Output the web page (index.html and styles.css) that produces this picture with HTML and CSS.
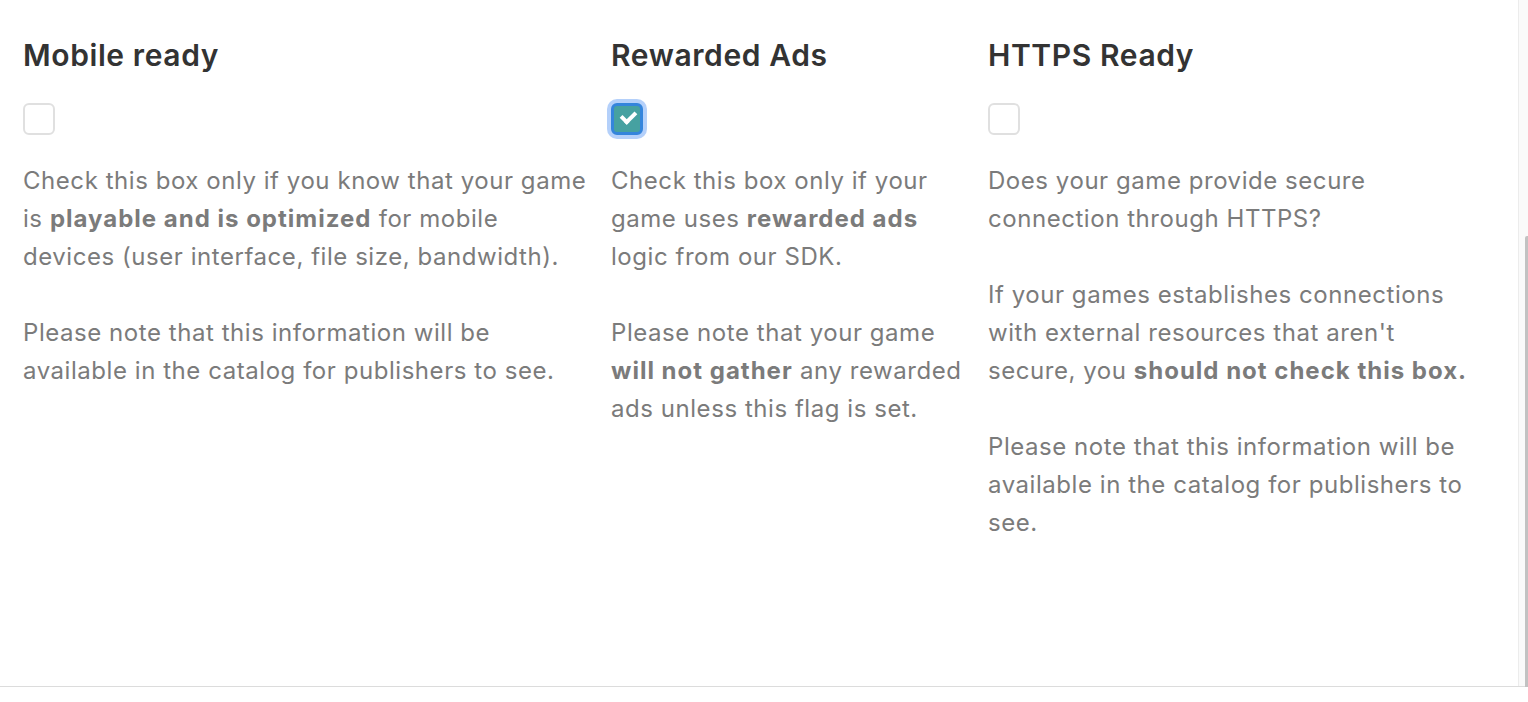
FILE: index.html
```html
<!DOCTYPE html>
<html lang="en">
<head>
    <meta charset="UTF-8">
    <meta name="viewport" content="width=device-width, initial-scale=1.0">
    <title>Game flags</title>
    <link rel="stylesheet" href="styles.css">
</head>
<body>
    <div class="panel">
        <div class="content">
            <section class="flag flag-mobile">
                <h2>Mobile ready</h2>
                <label class="check"><input type="checkbox"><span class="box"></span></label>
                <p>Check this box only if you know that your game is <b>playable and is optimized</b> for mobile devices (user interface, file size, bandwidth).</p>
                <p>Please note that this information will be available in the catalog for publishers to see.</p>
            </section>
            <section class="flag flag-ads">
                <h2>Rewarded Ads</h2>
                <label class="check focused"><input type="checkbox" checked><span class="box"></span></label>
                <p>Check this box only if your game uses <b>rewarded ads</b> logic from our SDK.</p>
                <p>Please note that your game <b>will not gather</b> any rewarded ads unless this flag is set.</p>
            </section>
            <section class="flag flag-https">
                <h2>HTTPS Ready</h2>
                <label class="check"><input type="checkbox"><span class="box"></span></label>
                <p>Does your game provide secure connection through HTTPS?</p>
                <p>If your games establishes connections with external resources that aren't secure, you <b>should not check this box.</b></p>
                <p>Please note that this information will be available in the catalog for publishers to see.</p>
            </section>
        </div>
        <div class="scrollbar">
            <div class="thumb"></div>
        </div>
    </div>
</body>
</html>
```

FILE: styles.css
```css
body {
    margin: 0;
    padding: 0;
    background: #fff;
    font-family: Inter, "Noto Sans", sans-serif;
}

.panel {
    display: flex;
    height: 686px;
    border-bottom: 1px solid #dcdcdc;
}

.content {
    flex-grow: 1;
    display: grid;
    grid-template-columns: 588px 377px 530px;
    align-content: start;
    padding: 37px 0 0 23px;
    border-right: 1px solid #ececec;
}

.flag {
    padding-right: 20px;
}

.flag-https {
    padding-right: 40px;
}

.flag h2 {
    margin: 0;
    font-size: 30px;
    line-height: 36px;
    font-weight: 600;
    color: #333;
    letter-spacing: 0.6px;
}

.flag p {
    margin: 0 0 38px;
    font-size: 24px;
    line-height: 38px;
    color: #7b7b7b;
    letter-spacing: 0.55px;
}

.flag p b {
    font-weight: 700;
    letter-spacing: 1px;
}

.check {
    display: block;
    width: 32px;
    height: 32px;
    margin: 30px 0 27px;
    position: relative;
}

.check input {
    position: absolute;
    opacity: 0;
    margin: 0;
}

.check .box {
    display: block;
    box-sizing: border-box;
    width: 32px;
    height: 32px;
    border: 2px solid #e0e0e0;
    border-radius: 6px;
    background: #fff;
}

.check input:checked + .box {
    border: 3px solid #3485dc;
    background: #46a1a1;
}

.check input:checked + .box::after {
    content: "";
    position: absolute;
    left: 10px;
    top: 8px;
    width: 11px;
    height: 6px;
    border-left: 4px solid #fff;
    border-bottom: 4px solid #fff;
    transform: rotate(-45deg);
}

.check.focused .box {
    box-shadow: 0 0 0 4px rgba(88, 150, 245, 0.45);
}

.scrollbar {
    width: 9px;
    background: #fafafa;
    display: flex;
    justify-content: flex-end;
}

.thumb {
    width: 3px;
    height: 452px;
    margin-top: 236px;
    background: #c2c2c2;
    border-radius: 2px 0 0 0;
}
```
